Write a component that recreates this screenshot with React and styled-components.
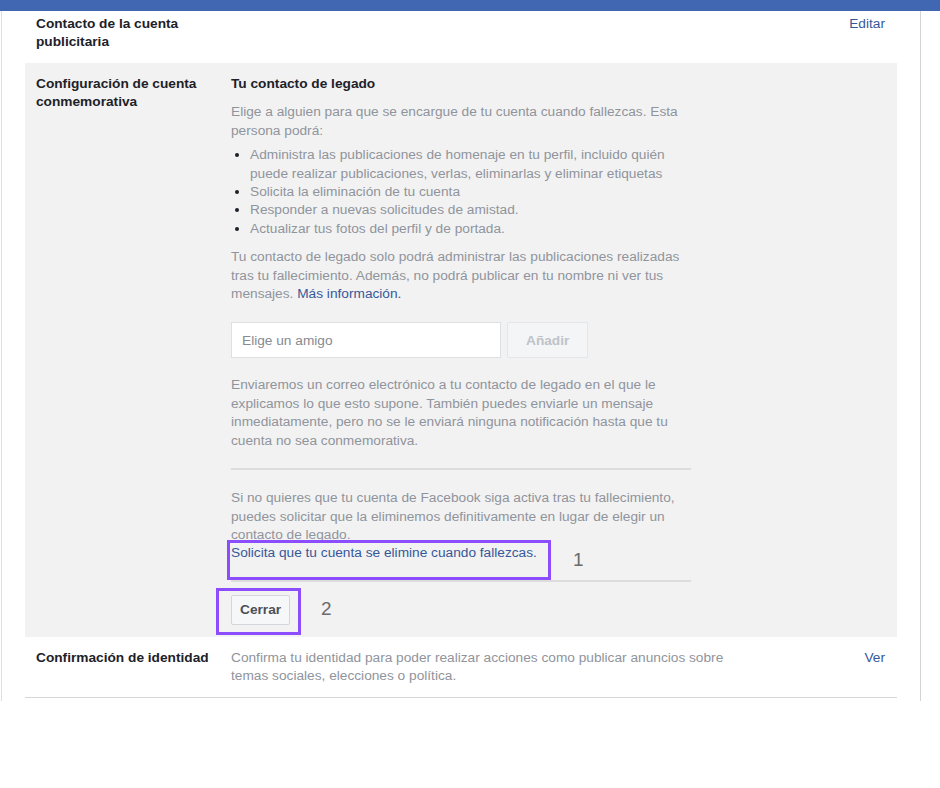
import styled, { createGlobalStyle } from 'styled-components'

//! Styles
const GlobalStyle = createGlobalStyle`
    html, body {
        margin: 0;
        padding: 0;
        background: #ffffff;
    }
    body {
        font-family: "Liberation Sans", Arial, Helvetica, sans-serif;
        font-size: 13.7px;
        line-height: 18.4px;
        color: #1d2129;
    }
`

const TopBar = styled.div`
    height: 11px;
    background: #4267b2;
`

const Frame = styled.div`
    margin-left: 1px;
    width: 920px;
    border-left: 1px solid #e0e0e0;
    border-right: 1px solid #d4d4d4;
    padding: 0 23px 3px;
    box-sizing: border-box;
`

const Row = styled.div`
    display: grid;
    grid-template-columns: 195px 1fr auto;
    padding: ${({ first, open }) =>
        first ? '4px 12px 2px 11px' : open ? '12px 12px 12px 11px' : '12px 12px 11px 11px'};
    min-height: ${({ first }) => (first ? '46px' : 'auto')};
    background: ${({ open }) => (open ? '#f2f2f2' : 'transparent')};
    border-bottom: ${({ last }) => (last ? '1px solid #d6d6d6' : 'none')};
`

const Label = styled.div`
    font-weight: bold;
    color: #1d2129;
    padding-right: 14px;
`

const Body = styled.div`
    color: #90949c;
    max-width: ${({ width }) => width}px;
`

const Action = styled.a`
    color: #365899;
    text-decoration: none;
    cursor: pointer;
`

const Heading = styled.div`
    font-weight: bold;
    color: #1d2129;
    margin-bottom: 10px;
`

const Para = styled.p`
    margin: 0;
`

const List = styled.ul`
    margin: 6px -14px 10px 0;
    padding-left: 19px;
    li {
        list-style: disc;
    }
    li::marker {
        color: #1d2129;
    }
`

const Link = styled.a`
    color: #365899;
    text-decoration: none;
`

const FriendForm = styled.div`
    display: flex;
    gap: 6px;
    margin: 19px 0 18px;
`

const FriendInput = styled.input`
    width: 270px;
    height: 36px;
    box-sizing: border-box;
    padding: 0 10px;
    border: 1px solid #dddfe2;
    background: #ffffff;
    font: inherit;
    font-size: 13.7px;
    &::placeholder {
        color: #868a91;
    }
`

const Button = styled.button`
    height: ${({ tall }) => (tall ? '36px' : '30px')};
    padding: 0 ${({ tall }) => (tall ? '18px' : '8px')};
    border: 1px solid ${({ disabled }) => (disabled ? '#e4e6e9' : '#d3d6db')};
    border-radius: 2px;
    background: ${({ disabled }) => (disabled ? '#f4f5f6' : '#f6f7f9')};
    color: ${({ disabled }) => (disabled ? '#bec3c9' : '#4b4f56')};
    font-family: inherit;
    font-size: 13.7px;
    font-weight: bold;
    cursor: ${({ disabled }) => (disabled ? 'default' : 'pointer')};
`

const Divider = styled.hr`
    border: 0;
    border-top: 2px solid #dcdcdc;
    margin: ${({ m }) => m};
`

const Marked = styled.div`
    position: relative;
`

// numbered callout frame drawn over a control
const Callout = styled.span`
    position: absolute;
    box-sizing: border-box;
    border: 3px solid #8c4dff;
    pointer-events: none;
`

const CalloutNumber = styled.span`
    position: absolute;
    font-size: 19px;
    line-height: 20px;
    color: #6b6b6b;
`

//! Page : Configuración
const App = () => {
    return (
        <>
            <GlobalStyle />
            <TopBar />
            <Frame>
                <Row first>
                    <Label>Contacto de la cuenta publicitaria</Label>
                    <div />
                    <Action>Editar</Action>
                </Row>

                <Row open>
                    <Label>Configuración de cuenta conmemorativa</Label>
                    <Body width={460}>
                        <Heading>Tu contacto de legado</Heading>
                        <Para>
                            Elige a alguien para que se encargue de tu cuenta cuando fallezcas. Esta
                            persona podrá:
                        </Para>
                        <List>
                            <li>
                                Administra las publicaciones de homenaje en tu perfil, incluido quién
                                puede realizar publicaciones, verlas, eliminarlas y eliminar etiquetas
                            </li>
                            <li>Solicita la eliminación de tu cuenta</li>
                            <li>Responder a nuevas solicitudes de amistad.</li>
                            <li>Actualizar tus fotos del perfil y de portada.</li>
                        </List>
                        <Para>
                            Tu contacto de legado solo podrá administrar las publicaciones realizadas
                            tras tu fallecimiento. Además, no podrá publicar en tu nombre ni ver tus
                            mensajes. <Link>Más información.</Link>
                        </Para>
                        <FriendForm>
                            <FriendInput placeholder="Elige un amigo" />
                            <Button tall disabled>
                                Añadir
                            </Button>
                        </FriendForm>
                        <Para>
                            Enviaremos un correo electrónico a tu contacto de legado en el que le
                            explicamos lo que esto supone. También puedes enviarle un mensaje
                            inmediatamente, pero no se le enviará ninguna notificación hasta que tu
                            cuenta no sea conmemorativa.
                        </Para>
                        <Divider m="18px 0 19px" />
                        <Para>
                            Si no quieres que tu cuenta de Facebook siga activa tras tu fallecimiento,
                            puedes solicitar que la eliminemos definitivamente en lugar de elegir un
                            contacto de legado.
                        </Para>
                        <Marked>
                            <Link>Solicita que tu cuenta se elimine cuando fallezcas.</Link>
                            <Callout style={{ left: -4, top: -4, width: 324, height: 40 }} />
                            <CalloutNumber style={{ left: 342, top: 6 }}>1</CalloutNumber>
                        </Marked>
                        <Divider m="17px 0 13px" />
                        <Marked>
                            <Button>Cerrar</Button>
                            <Callout style={{ left: -15, top: -7, width: 85, height: 47 }} />
                            <CalloutNumber style={{ left: 90, top: 4 }}>2</CalloutNumber>
                        </Marked>
                    </Body>
                    <div />
                </Row>

                <Row last>
                    <Label>Confirmación de identidad</Label>
                    <Body width={525}>
                        Confirma tu identidad para poder realizar acciones como publicar anuncios sobre
                        temas sociales, elecciones o política.
                    </Body>
                    <Action>Ver</Action>
                </Row>
            </Frame>
        </>
    )
}

export default App
